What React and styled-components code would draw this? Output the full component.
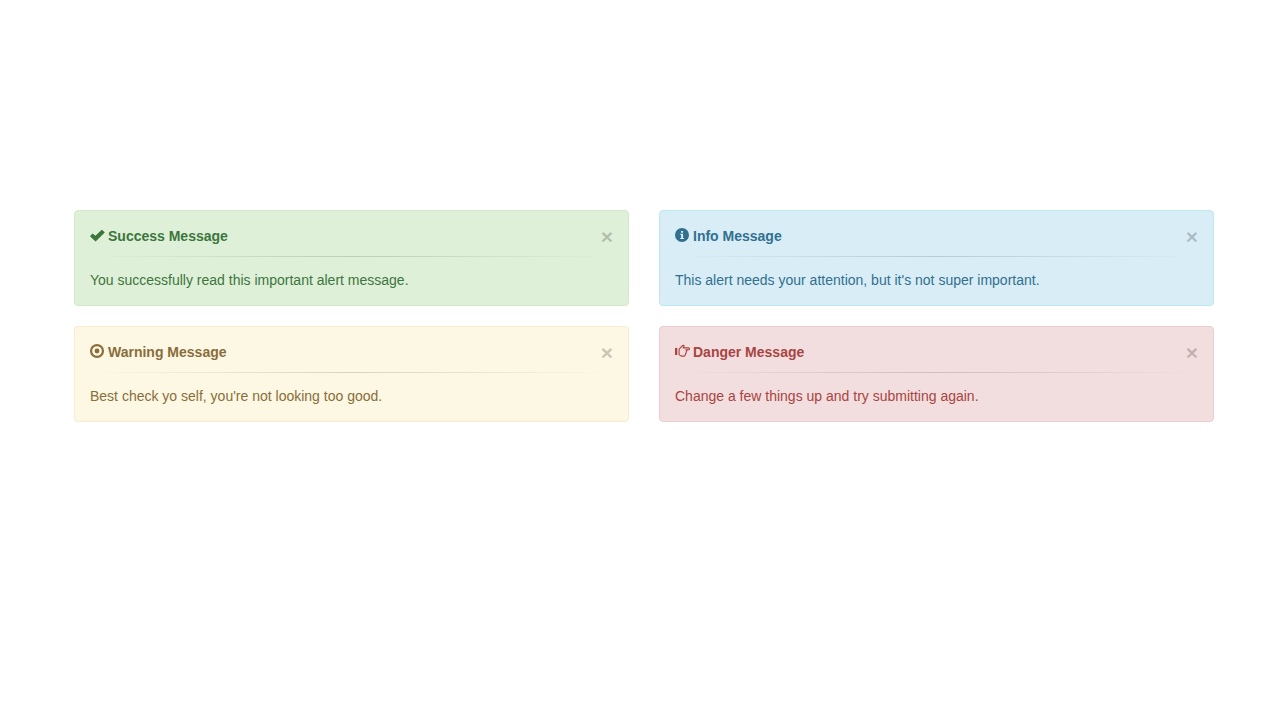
import React, { useState } from 'react';
import styled, { createGlobalStyle } from 'styled-components';

const GlobalStyle = createGlobalStyle`
  *, *::before, *::after { box-sizing: border-box; }
  body {
    margin: 0;
    background: #fff;
    font-family: "Helvetica Neue", Helvetica, Arial, "Liberation Sans", sans-serif;
    font-size: 14px;
    line-height: 20px;
  }
`;

const tones = {
  success: { text: '#3c763d', fill: '#dff0d8', border: '#d6e9c6' },
  info: { text: '#31708f', fill: '#d9edf7', border: '#bce8f1' },
  warning: { text: '#8a6d3b', fill: '#fcf8e3', border: '#faebcc' },
  danger: { text: '#a94442', fill: '#f2dede', border: '#ebccd1' },
};

const Page = styled.main`
  padding: 210px 15px 20px 23px;
`;

const AlertGrid = styled.div`
  display: grid;
  grid-template-columns: repeat(2, minmax(0, 1fr));
  gap: 20px 30px;
  align-items: start;
  max-width: 1140px;
  margin: 0 auto;

  @media (max-width: 767px) {
    grid-template-columns: minmax(0, 1fr);
  }
`;

const AlertBox = styled.section`
  padding: 15px;
  color: ${({ $tone }) => tones[$tone].text};
  background: ${({ $tone }) => tones[$tone].fill};
  border: 1px solid ${({ $tone }) => tones[$tone].border};
  border-radius: 4px;
`;

const AlertHeader = styled.header`
  display: flex;
  align-items: flex-start;
  gap: 4px;
  height: 20px;
`;

const Icon = styled.svg`
  flex: none;
  width: 14px;
  height: 14px;
  margin-top: 2px;
  overflow: visible;
  fill: currentColor;
`;

const Title = styled.strong`
  flex: 1;
  font-weight: 700;
`;

const CloseButton = styled.button`
  padding: 0;
  border: 0;
  background: transparent;
  color: #000;
  font: inherit;
  font-size: 21px;
  font-weight: 700;
  line-height: 21px;
  text-shadow: 0 1px 0 #fff;
  opacity: 0.2;
  cursor: pointer;

  &:hover, &:focus { opacity: 0.5; }
`;

const Divider = styled.hr`
  height: 1px;
  margin: 10px 0 13px;
  border: 0;
  background: linear-gradient(to right, rgba(0, 0, 0, 0), rgba(0, 0, 0, 0.15), rgba(0, 0, 0, 0));
`;

const Message = styled.p`
  margin: 0;
`;

const glyphs = {
  success: (
    <path d="M.2 7.9 2.3 5.7Q2.6 5.4 2.9 5.7L5.4 7.7 11.5 1.9Q11.8 1.6 12.1 1.9L14.5 4.1Q14.8 4.4 14.5 4.7L5.9 13.3Q5.6 13.6 5.3 13.3L.2 8.5Q-.1 8.2 .2 7.9Z" />
  ),
  info: (
    <path
      fillRule="evenodd"
      d="M7 0a7 7 0 1 1 0 14A7 7 0 0 1 7 0ZM6.1 2.9v1.8h2V2.9ZM5.2 5.8v.9h.9v3.2h-.9v1h3.7v-1H8.1V5.8Z"
    />
  ),
  warning: (
    <>
      <circle cx="7" cy="7" r="5.95" fill="none" stroke="currentColor" strokeWidth="2.2" />
      <circle cx="7" cy="7" r="2.4" />
    </>
  ),
  danger: (
    <>
      <path d="M0 3.9h2.3v7.1H0Z" />
      <path
        d="M4.1 10.6V5.2L7.7 1.5Q8.8 .7 9.1 1.9L8.2 3.9H13.5Q14.8 4.2 14.4 5.2 14 5.9 13 5.9H10.9L11.8 7 11 8.3 11.3 9.2 10.3 10.2V11.1L9.3 12.1H6.1L4.1 10.6Z"
        fill="none"
        stroke="currentColor"
        strokeWidth="1.1"
        strokeLinejoin="round"
      />
    </>
  ),
};

const alerts = [
  { tone: 'success', title: 'Success Message', message: 'You successfully read this important alert message.' },
  { tone: 'info', title: 'Info Message', message: "This alert needs your attention, but it's not super important." },
  { tone: 'warning', title: 'Warning Message', message: "Best check yo self, you're not looking too good." },
  { tone: 'danger', title: 'Danger Message', message: 'Change a few things up and try submitting again.' },
];

function Alert({ tone, title, message, onClose }) {
  return (
    <AlertBox $tone={tone} role="alert">
      <AlertHeader>
        <Icon viewBox="0 0 14 14" aria-hidden="true">{glyphs[tone]}</Icon>
        <Title>{title}</Title>
        <CloseButton type="button" onClick={onClose}>×</CloseButton>
      </AlertHeader>
      <Divider />
      <Message>{message}</Message>
    </AlertBox>
  );
}

export default function App() {
  const [closed, setClosed] = useState([]);
  return (
    <>
      <GlobalStyle />
      <Page>
        <AlertGrid>
          {alerts
            .filter(({ tone }) => !closed.includes(tone))
            .map((alert) => (
              <Alert key={alert.tone} {...alert} onClose={() => setClosed([...closed, alert.tone])} />
            ))}
        </AlertGrid>
      </Page>
    </>
  );
}
